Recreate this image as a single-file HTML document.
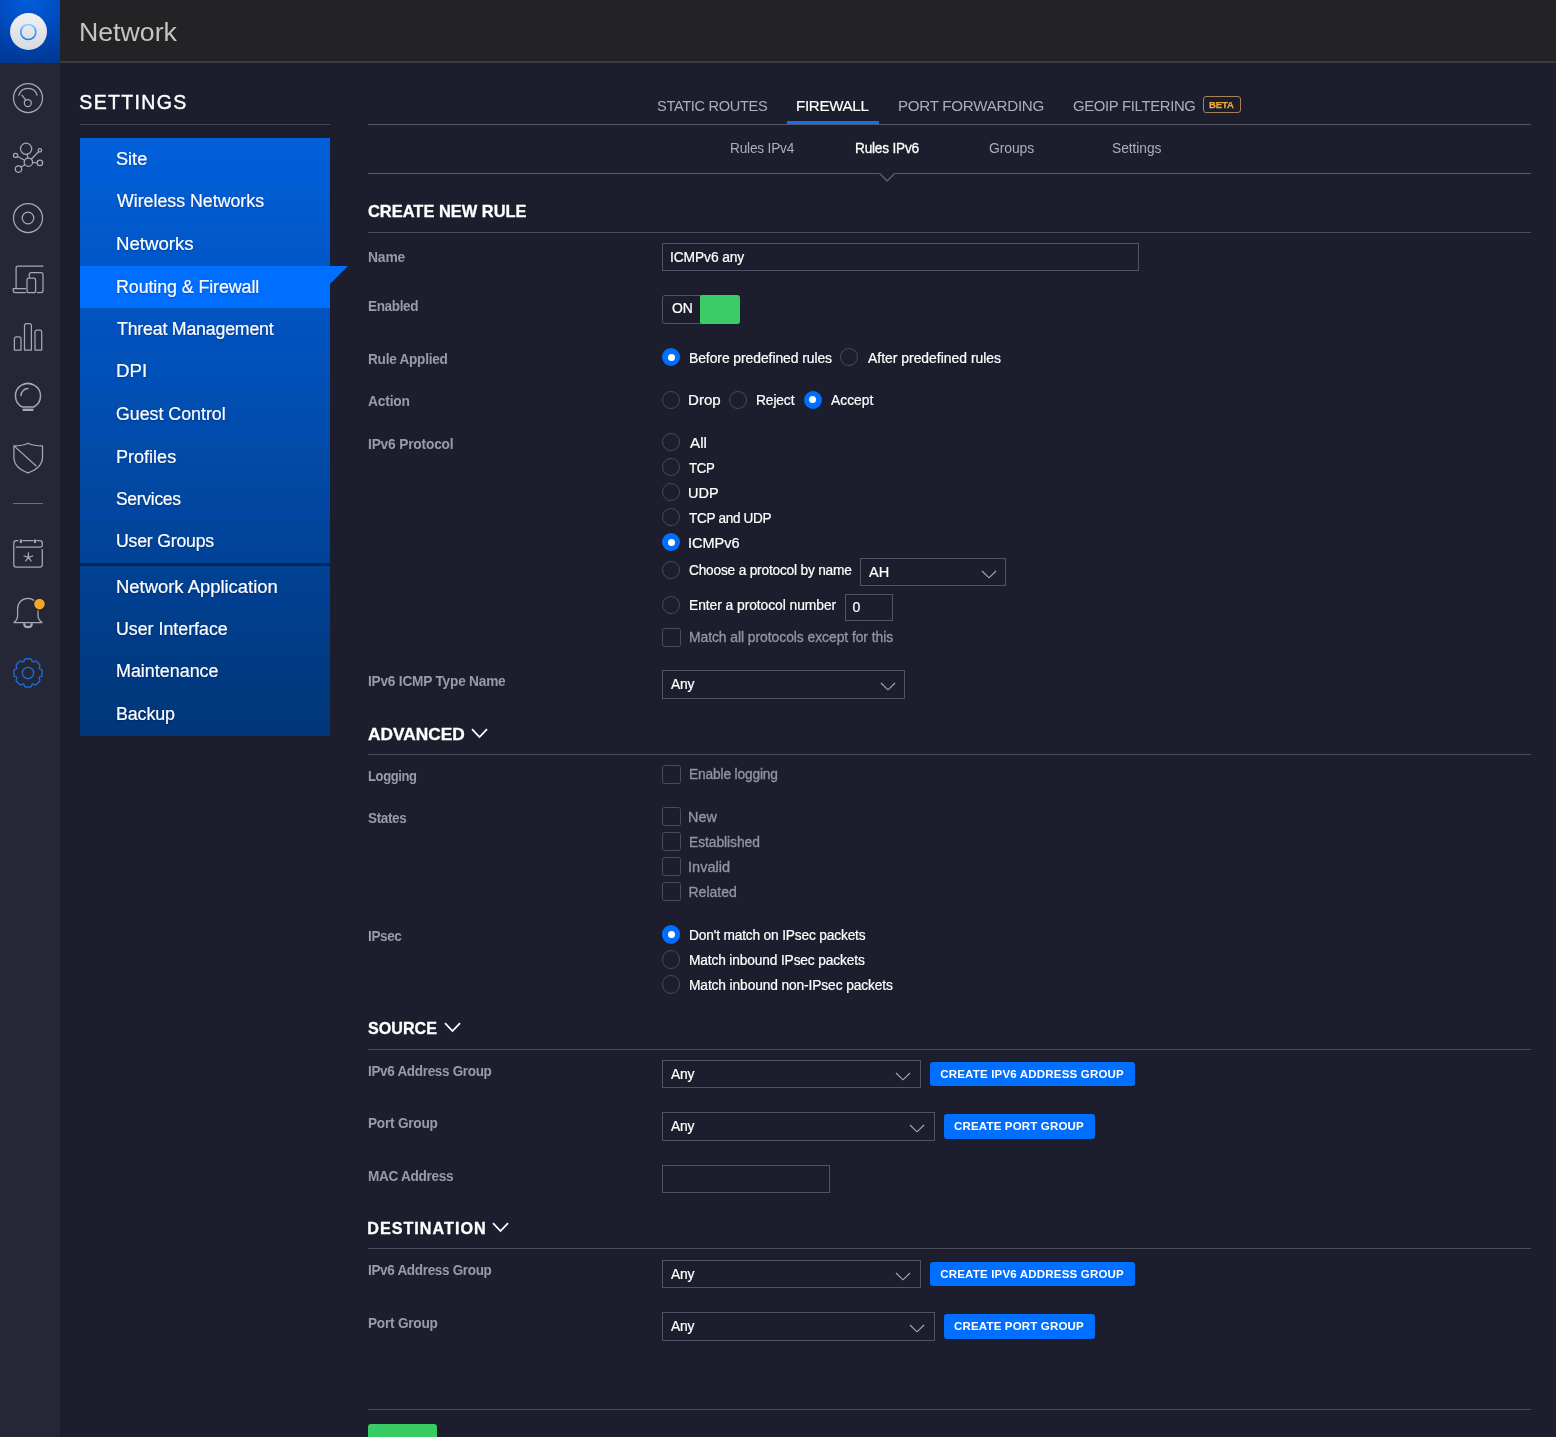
<!DOCTYPE html>
<html lang="en"><head><meta charset="utf-8"><title>Network</title>
<style>
html,body{margin:0;padding:0;}
body{width:1556px;height:1437px;overflow:hidden;background:#1c1e2d;position:relative;font-family:"Liberation Sans",sans-serif;}
.t{position:absolute;white-space:nowrap;line-height:1;display:block;transform-origin:0 0;}
.a{position:absolute;display:block;box-sizing:border-box;}
.hl{position:absolute;height:1px;background:#565866;left:368px;width:1163px;}
.box{position:absolute;box-sizing:border-box;border:1px solid #525463;background:transparent;}
.rd{margin-left:-0.5px;position:absolute;box-sizing:border-box;width:18.4px;height:18.4px;border-radius:50%;border:1px solid #474a5c;}
.rd.on{border:none;background:#006fff;}
.rd.on::after{content:"";position:absolute;left:5.7px;top:5.7px;width:7px;height:7px;border-radius:50%;background:#fff;}
.cb{margin-left:-0.5px;position:absolute;box-sizing:border-box;width:18.5px;height:18.5px;border:1px solid #484a5d;border-radius:2.5px;}
.btn{position:absolute;background:#006fff;border-radius:3px;}
svg{position:absolute;overflow:visible;}
#txt{position:absolute;left:0;top:0;width:1556px;height:1437px;will-change:transform;}

</style></head>
<body>
<!-- header -->
<div class="a" style="left:0;top:0;width:1556px;height:61px;background:#232325;"></div>
<div class="a" style="left:60px;top:61px;width:1496px;height:2px;background:#3b3b41;"></div>
<div class="a" style="left:0;top:0;width:60px;height:63px;background:radial-gradient(circle at 50% 0%,#005edb 0%,#004cc0 45%,#003c9e 80%,#00368f 100%);"></div>
<div class="a" style="left:10px;top:13px;width:37px;height:37px;border-radius:50%;background:linear-gradient(180deg,#f1f1f4 0%,#e5e6eb 45%,#d7d9df 100%);"></div>
<svg width="20" height="20" style="left:18px;top:21.5px" viewBox="0 0 20 20"><defs><linearGradient id="lg" x1="0" y1="0" x2="0" y2="1"><stop offset="0" stop-color="#86d2ff"/><stop offset="0.5" stop-color="#3aa0f8"/><stop offset="1" stop-color="#1f7fec"/></linearGradient></defs><circle cx="10.3" cy="10" r="7.5" fill="none" stroke="url(#lg)" stroke-width="1.7"/></svg>
<!-- sidebar -->
<div class="a" style="left:0;top:63px;width:60px;height:1374px;background:#252736;"></div>
<div class="a" style="left:13px;top:503px;width:30px;height:1px;background:#6b6c7a;"></div>
<svg width="60" height="1437" style="left:0;top:0" viewBox="0 0 60 1437" fill="none" stroke="#a6a8b7" stroke-width="1.25" stroke-linecap="round" stroke-linejoin="round">
<!-- dashboard -->
<circle cx="28" cy="98" r="14.5"/>
<path d="M18.9 95.2 A9.5 9.5 0 0 1 37.1 95.2"/>
<circle cx="27.8" cy="103" r="3.5"/>
<path d="M22 95.2 L25.8 100.2"/>
<!-- topology -->
<circle cx="26.1" cy="148.8" r="5.6"/>
<circle cx="28.4" cy="162.2" r="4.2"/>
<circle cx="15.6" cy="155.4" r="2.1"/>
<circle cx="39.9" cy="150.3" r="1.7"/>
<circle cx="39.9" cy="162.9" r="2.7"/>
<circle cx="18.5" cy="169.1" r="3.2"/>
<path d="M27.2 154.3 L27.7 158 M17.5 156.5 L24.6 160.3 M38.7 151.5 L31.3 159.2 M32.6 162.5 L37.2 162.8 M21 167 L25 164.7"/>
<!-- devices -->
<circle cx="28" cy="218" r="14.5"/>
<circle cx="28" cy="218" r="5.8"/>
<!-- clients -->
<path d="M43 266 H18 Q16.1 266 16.1 268 V288.3"/>
<path d="M25.5 288.5 H13.2 V290.2 Q13.2 292.5 15.5 292.5 H25.5"/>
<path d="M29.3 277.2 V274.5 Q29.3 272.5 31.3 272.5 H41 Q43 272.5 43 274.5 V290.5 Q43 292.5 41 292.5 H37.3"/>
<rect x="27" y="278.2" width="8.6" height="14.5" rx="2"/>
<!-- stats -->
<path d="M14.4 350.1 V338.9 Q14.4 336.9 16.4 336.9 H19 Q21 336.9 21 338.9 V350.1 Z"/>
<path d="M24.5 350.1 V325.6 Q24.5 323.6 26.5 323.6 H29.4 Q31.4 323.6 31.4 325.6 V350.1 Z"/>
<path d="M35 350.1 V332.2 Q35 330.2 37 330.2 H39.7 Q41.7 330.2 41.7 332.2 V350.1 Z"/>
<!-- insights -->
<path d="M22.3 407 C13.5 402.6 13.2 390 21.5 385.2 C30 380.3 40.5 386.5 40.5 395.8 C40.5 400.8 37.8 404.9 33.8 407 Z" stroke-width="1.5"/>
<path d="M21 395.6 A7 7 0 0 1 27.9 388.6" stroke-width="1.5"/>
<path d="M22.6 409.8 H33.4" stroke-width="2.4" stroke-linecap="butt"/>
<!-- shield -->
<path d="M28 443.2 C23 445.6 18.5 445.9 13.9 445.9 V457 C13.9 465 20 470 28 472.8 C36 470 42.5 465 42.5 457 V445.9 C37.5 445.9 33 445.6 28 443.2 Z"/>
<path d="M14.3 446.1 L35.9 465.8"/>
<!-- calendar -->
<path d="M17.8 540.7 H16.4 Q13.8 540.7 13.8 543.3 V564.6 Q13.8 567.2 16.4 567.2 H39.7 Q42.3 567.2 42.3 564.6 V549.4"/>
<path d="M36.9 540.7 H39.7 Q42.3 540.7 42.3 543.3 V545.3 Q42.3 547 40.5 547 H16.2"/>
<path d="M23 540.7 H33"/>
<path d="M20.9 539.6 V543 M35 539.6 V543" stroke-width="2.1" stroke-linecap="butt"/>
<path d="M28.4 553 V557.4 M28.4 557.4 L24.1 556 M28.4 557.4 L32.7 556 M28.4 557.4 L25.7 560.9 M28.4 557.4 L31.1 560.9" stroke-width="1.3"/>
<!-- bell -->
<path d="M14 622.6 H42 C39.3 620.5 38 618.5 38 615.5 V609 C38 602.5 33.5 598.3 27.9 598.3 C22.2 598.3 17.6 602.5 17.6 609 V615.5 C17.6 618.5 16.5 620.5 14 622.6 Z"/>
<path d="M24.3 623.2 V624.2 Q24.3 627.2 28 627.2 Q31.7 627.2 31.7 624.2 V623.2" stroke-width="2.2" stroke-linecap="butt"/>
<circle cx="39.5" cy="604.1" r="5.9" fill="#f5a623" stroke="#222332" stroke-width="1.2"/>
</svg>
<!-- gear -->
<svg width="60" height="60" style="left:0;top:643px" viewBox="0 0 60 60" fill="none" stroke="#1e6bda" stroke-width="1.35" stroke-linejoin="round">
<path d="M23.42 18.83 Q24.09 18.55 24.22 17.16 L24.22 17.16 Q24.34 15.77 26.34 15.77 L29.66 15.77 Q31.66 15.77 31.78 17.16 L31.78 17.16 Q31.91 18.55 32.58 18.83 L32.58 18.83 Q33.26 19.11 34.34 18.22 L34.34 18.22 Q35.41 17.32 36.82 18.73 L39.17 21.08 Q40.58 22.49 39.68 23.56 L39.68 23.56 Q38.79 24.64 39.07 25.32 L39.07 25.32 Q39.35 25.99 40.74 26.12 L40.74 26.12 Q42.13 26.24 42.13 28.24 L42.13 31.56 Q42.13 33.56 40.74 33.68 L40.74 33.68 Q39.35 33.81 39.07 34.48 L39.07 34.48 Q38.79 35.16 39.68 36.24 L39.68 36.24 Q40.58 37.31 39.17 38.72 L36.82 41.07 Q35.41 42.48 34.34 41.58 L34.34 41.58 Q33.26 40.69 32.58 40.97 L32.58 40.97 Q31.91 41.25 31.78 42.64 L31.78 42.64 Q31.66 44.03 29.66 44.03 L26.34 44.03 Q24.34 44.03 24.22 42.64 L24.22 42.64 Q24.09 41.25 23.42 40.97 L23.42 40.97 Q22.74 40.69 21.66 41.58 L21.66 41.58 Q20.59 42.48 19.18 41.07 L16.83 38.72 Q15.42 37.31 16.32 36.24 L16.32 36.24 Q17.21 35.16 16.93 34.48 L16.93 34.48 Q16.65 33.81 15.26 33.68 L15.26 33.68 Q13.87 33.56 13.87 31.56 L13.87 28.24 Q13.87 26.24 15.26 26.12 L15.26 26.12 Q16.65 25.99 16.93 25.32 L16.93 25.32 Q17.21 24.64 16.32 23.56 L16.32 23.56 Q15.42 22.49 16.83 21.08 L19.18 18.73 Q20.59 17.32 21.66 18.22 L21.66 18.22 Q22.74 19.11 23.42 18.83 Z"/>
<circle cx="28" cy="30" r="5.6"/>
</svg>

<!-- settings menu -->
<div class="a" style="left:80px;top:124px;width:250px;height:1px;background:#454757;"></div>
<div class="a" style="left:80px;top:138px;width:250px;height:42.5px;background:linear-gradient(180deg,#0260da,#005cd6);"></div>
<div class="a" style="left:80px;top:180.5px;width:250px;height:42.5px;background:linear-gradient(180deg,#025dd3,#0059cf);"></div>
<div class="a" style="left:80px;top:223px;width:250px;height:42.5px;background:linear-gradient(180deg,#025acd,#0056c9);"></div>
<div class="a" style="left:80px;top:265.5px;width:250px;height:42.5px;background:linear-gradient(180deg,#0257c6,#0053c2);"></div>
<div class="a" style="left:80px;top:308px;width:250px;height:42.5px;background:linear-gradient(180deg,#0254c0,#0050bc);"></div>
<div class="a" style="left:80px;top:350.5px;width:250px;height:42.5px;background:linear-gradient(180deg,#0252b9,#004eb5);"></div>
<div class="a" style="left:80px;top:393px;width:250px;height:42.5px;background:linear-gradient(180deg,#024fb1,#004bad);"></div>
<div class="a" style="left:80px;top:435.5px;width:250px;height:42.5px;background:linear-gradient(180deg,#024caa,#0048a6);"></div>
<div class="a" style="left:80px;top:478px;width:250px;height:42.5px;background:linear-gradient(180deg,#0249a3,#00459f);"></div>
<div class="a" style="left:80px;top:520.5px;width:250px;height:43px;background:linear-gradient(180deg,#02469b,#004297);"></div>
<div class="a" style="left:80px;top:565.5px;width:250px;height:42.5px;background:linear-gradient(180deg,#024293,#003e8f);"></div>
<div class="a" style="left:80px;top:608px;width:250px;height:42.5px;background:linear-gradient(180deg,#023f8c,#003b88);"></div>
<div class="a" style="left:80px;top:650.5px;width:250px;height:42.5px;background:linear-gradient(180deg,#023c84,#003880);"></div>
<div class="a" style="left:80px;top:693px;width:250px;height:42.5px;background:linear-gradient(180deg,#02397d,#003579);"></div>
<div class="a" style="left:80px;top:563px;width:250px;height:2.5px;background:#04275a;"></div>
<div class="a" style="left:80px;top:265.5px;width:250px;height:42.5px;background:#006fff;"></div>
<svg width="20" height="20" style="left:330px;top:265.5px" viewBox="0 0 20 20"><path d="M0 0 H18 L0 18 Z" fill="#006fff"/></svg>

<!-- tabs -->
<div class="hl" style="top:124px;"></div>
<div class="a" style="left:787px;top:121px;width:92px;height:3px;background:#1271ea;"></div>
<div class="a" style="left:1203px;top:96px;width:38px;height:17px;border:1px solid #a5835a;border-radius:3px;"></div>
<div class="hl" style="top:173px;"></div>
<svg width="20" height="12" style="left:877px;top:172px" viewBox="0 0 20 12"><path d="M2.2 0 H18.2 V2 L10.2 9 L2.2 2 Z" fill="#1c1e2d" stroke="none"/><path d="M2.4 1.3 L10.2 8.9 L18 1.3" fill="none" stroke="#565866" stroke-width="1.6"/></svg>

<!-- section lines -->
<div class="hl" style="top:232px;background:#4a4c5a;"></div>
<div class="hl" style="top:754px;background:#4a4c5a;"></div>
<div class="hl" style="top:1049px;background:#4a4c5a;"></div>
<div class="hl" style="top:1248px;background:#4a4c5a;"></div>
<div class="hl" style="top:1409px;background:#4a4c5a;"></div>

<!-- header chevrons -->
<svg width="18" height="11" style="left:471px;top:727.5px" viewBox="0 0 18 11"><path d="M1 1.2 L8.5 9 L16 1.2" fill="none" stroke="#fff" stroke-width="1.8"/></svg>
<svg width="18" height="11" style="left:443.5px;top:1021.5px" viewBox="0 0 18 11"><path d="M1 1.2 L8.5 9 L16 1.2" fill="none" stroke="#fff" stroke-width="1.8"/></svg>
<svg width="18" height="11" style="left:492px;top:1221.5px" viewBox="0 0 18 11"><path d="M1 1.2 L8.5 9 L16 1.2" fill="none" stroke="#fff" stroke-width="1.8"/></svg>

<!-- name input -->
<div class="box" style="left:662px;top:243px;width:477px;height:28px;"></div>
<!-- toggle -->
<div class="box" style="left:662px;top:295px;width:78px;height:29px;border-radius:3px;"></div>
<div class="a" style="left:700px;top:295px;width:40px;height:29px;background:#3bcc66;border-radius:2px 3px 3px 2px;"></div>

<!-- radios -->
<div class="rd on" style="left:662.5px;top:348px;"></div>
<div class="rd" style="left:840.2px;top:348px;"></div>
<div class="rd" style="left:662.5px;top:390.6px;"></div>
<div class="rd" style="left:729.2px;top:390.6px;"></div>
<div class="rd on" style="left:804.2px;top:390.6px;"></div>
<div class="rd" style="left:662.5px;top:433px;"></div>
<div class="rd" style="left:662.5px;top:458px;"></div>
<div class="rd" style="left:662.5px;top:483px;"></div>
<div class="rd" style="left:662.5px;top:508px;"></div>
<div class="rd on" style="left:662.5px;top:533px;"></div>
<div class="rd" style="left:662.5px;top:560.6px;"></div>
<div class="rd" style="left:662.5px;top:595.6px;"></div>
<div class="cb" style="left:662.5px;top:628px;"></div>
<!-- protocol select / number -->
<div class="box" style="left:860px;top:558px;width:146px;height:28px;"></div>
<svg width="16" height="9" style="left:980.5px;top:569.5px" viewBox="0 0 16 9"><path d="M1 1 L8 7.8 L15 1" fill="none" stroke="#a9acb9" stroke-width="1.15"/></svg>
<div class="box" style="left:845px;top:593.5px;width:47.5px;height:27px;"></div>
<!-- icmp type select -->
<div class="box" style="left:662px;top:670px;width:243px;height:29px;"></div>
<svg width="16" height="9" style="left:879.5px;top:681.5px" viewBox="0 0 16 9"><path d="M1 1 L8 7.8 L15 1" fill="none" stroke="#a9acb9" stroke-width="1.15"/></svg>

<!-- advanced -->
<div class="cb" style="left:662.5px;top:765px;"></div>
<div class="cb" style="left:662.5px;top:807px;"></div>
<div class="cb" style="left:662.5px;top:832px;"></div>
<div class="cb" style="left:662.5px;top:857px;"></div>
<div class="cb" style="left:662.5px;top:882px;"></div>
<div class="rd on" style="left:662.5px;top:925.4px;"></div>
<div class="rd" style="left:662.5px;top:950.4px;"></div>
<div class="rd" style="left:662.5px;top:975.4px;"></div>

<!-- source -->
<div class="box" style="left:662px;top:1060px;width:259px;height:28px;"></div>
<svg width="16" height="9" style="left:895px;top:1072px" viewBox="0 0 16 9"><path d="M1 1 L8 7.8 L15 1" fill="none" stroke="#a9acb9" stroke-width="1.15"/></svg>
<div class="btn" style="left:930px;top:1062px;width:205px;height:23.5px;"></div>
<div class="box" style="left:662px;top:1112px;width:273px;height:28.5px;"></div>
<svg width="16" height="9" style="left:909px;top:1124px" viewBox="0 0 16 9"><path d="M1 1 L8 7.8 L15 1" fill="none" stroke="#a9acb9" stroke-width="1.15"/></svg>
<div class="btn" style="left:944px;top:1114px;width:151px;height:24.5px;"></div>
<div class="box" style="left:662px;top:1165px;width:168px;height:28px;"></div>

<!-- destination -->
<div class="box" style="left:662px;top:1259.5px;width:259px;height:28px;"></div>
<svg width="16" height="9" style="left:895px;top:1272px" viewBox="0 0 16 9"><path d="M1 1 L8 7.8 L15 1" fill="none" stroke="#a9acb9" stroke-width="1.15"/></svg>
<div class="btn" style="left:930px;top:1262px;width:205px;height:23.5px;"></div>
<div class="box" style="left:662px;top:1312px;width:273px;height:28.5px;"></div>
<svg width="16" height="9" style="left:909px;top:1324px" viewBox="0 0 16 9"><path d="M1 1 L8 7.8 L15 1" fill="none" stroke="#a9acb9" stroke-width="1.15"/></svg>
<div class="btn" style="left:944px;top:1314px;width:151px;height:24.5px;"></div>

<!-- save button (clipped) -->
<div class="a" style="left:368px;top:1424px;width:69px;height:30px;background:#39cc64;border-radius:3px;"></div>

<div id="txt">
<span class="t" id="t0" style="left:78.87px;top:20px;font-size:25px;font-weight:400;color:#c6c3c0;transform:scaleX(1.0674);">Network</span>
<span class="t" id="t1" style="left:79.25px;top:93px;font-size:19.5px;font-weight:400;color:#fff;letter-spacing:1.371px;-webkit-text-stroke:0.4px #fff;">SETTINGS</span>
<span class="t" id="t2" style="left:116.24px;top:150px;font-size:18px;font-weight:400;color:#fff;transform:scaleX(1.0068);-webkit-text-stroke:0.2px #fff;text-shadow:0 1px 1.5px rgba(0,10,60,0.35);">Site</span>
<span class="t" id="t3" style="left:117.00px;top:192px;font-size:18px;font-weight:400;color:#fff;transform:scaleX(0.9865);-webkit-text-stroke:0.2px #fff;text-shadow:0 1px 1.5px rgba(0,10,60,0.35);">Wireless Networks</span>
<span class="t" id="t4" style="left:115.71px;top:235px;font-size:18px;font-weight:400;color:#fff;transform:scaleX(1.0348);-webkit-text-stroke:0.2px #fff;text-shadow:0 1px 1.5px rgba(0,10,60,0.35);">Networks</span>
<span class="t" id="t5" style="left:115.76px;top:278px;font-size:18px;font-weight:400;color:#fff;letter-spacing:-0.095px;transform:scaleX(0.9915);-webkit-text-stroke:0.2px #fff;text-shadow:0 1px 1.5px rgba(0,10,60,0.35);">Routing &amp; Firewall</span>
<span class="t" id="t6" style="left:116.75px;top:320px;font-size:18px;font-weight:400;color:#fff;letter-spacing:-0.187px;transform:scaleX(0.9846);-webkit-text-stroke:0.2px #fff;text-shadow:0 1px 1.5px rgba(0,10,60,0.35);">Threat Management</span>
<span class="t" id="t7" style="left:115.70px;top:362px;font-size:18px;font-weight:400;color:#fff;transform:scaleX(1.0385);-webkit-text-stroke:0.2px #fff;text-shadow:0 1px 1.5px rgba(0,10,60,0.35);">DPI</span>
<span class="t" id="t8" style="left:116.26px;top:405px;font-size:18px;font-weight:400;color:#fff;transform:scaleX(0.9876);-webkit-text-stroke:0.2px #fff;text-shadow:0 1px 1.5px rgba(0,10,60,0.35);">Guest Control</span>
<span class="t" id="t9" style="left:115.75px;top:448px;font-size:18px;font-weight:400;color:#fff;transform:scaleX(1.0026);-webkit-text-stroke:0.2px #fff;text-shadow:0 1px 1.5px rgba(0,10,60,0.35);">Profiles</span>
<span class="t" id="t10" style="left:116.27px;top:490px;font-size:18px;font-weight:400;color:#fff;letter-spacing:-0.302px;transform:scaleX(0.9719);-webkit-text-stroke:0.2px #fff;text-shadow:0 1px 1.5px rgba(0,10,60,0.35);">Services</span>
<span class="t" id="t11" style="left:115.77px;top:532px;font-size:18px;font-weight:400;color:#fff;letter-spacing:-0.206px;transform:scaleX(0.9822);-webkit-text-stroke:0.2px #fff;text-shadow:0 1px 1.5px rgba(0,10,60,0.35);">User Groups</span>
<span class="t" id="t12" style="left:115.72px;top:578px;font-size:18px;font-weight:400;color:#fff;transform:scaleX(1.0234);-webkit-text-stroke:0.2px #fff;text-shadow:0 1px 1.5px rgba(0,10,60,0.35);">Network Application</span>
<span class="t" id="t13" style="left:115.77px;top:620px;font-size:18px;font-weight:400;color:#fff;transform:scaleX(0.9879);-webkit-text-stroke:0.2px #fff;text-shadow:0 1px 1.5px rgba(0,10,60,0.35);">User Interface</span>
<span class="t" id="t14" style="left:115.76px;top:662px;font-size:18px;font-weight:400;color:#fff;transform:scaleX(0.9946);-webkit-text-stroke:0.2px #fff;text-shadow:0 1px 1.5px rgba(0,10,60,0.35);">Maintenance</span>
<span class="t" id="t15" style="left:115.76px;top:705px;font-size:18px;font-weight:400;color:#fff;letter-spacing:-0.110px;transform:scaleX(0.9913);-webkit-text-stroke:0.2px #fff;text-shadow:0 1px 1.5px rgba(0,10,60,0.35);">Backup</span>
<span class="t" id="t16" style="left:656.79px;top:98px;font-size:15.5px;font-weight:400;color:#abaeba;letter-spacing:-0.341px;transform:scaleX(0.9411);">STATIC ROUTES</span>
<span class="t" id="t17" style="left:796.38px;top:98px;font-size:15.5px;font-weight:400;color:#fff;letter-spacing:-0.318px;transform:scaleX(0.9753);-webkit-text-stroke:0.15px #fff;">FIREWALL</span>
<span class="t" id="t18" style="left:898.28px;top:98px;font-size:15.5px;font-weight:400;color:#abaeba;letter-spacing:-0.285px;transform:scaleX(0.9779);">PORT FORWARDING</span>
<span class="t" id="t19" style="left:1073.28px;top:98px;font-size:15.5px;font-weight:400;color:#abaeba;letter-spacing:-0.341px;transform:scaleX(0.9592);">GEOIP FILTERING</span>
<span class="t" id="t20" style="left:1209.40px;top:100px;font-size:9.6px;font-weight:700;color:#f0a93a;letter-spacing:-0.083px;transform:scaleX(0.9918);-webkit-text-stroke:0.25px #f0a93a;">BETA</span>
<span class="t" id="t21" style="left:729.78px;top:141px;font-size:14px;font-weight:400;color:#abaeba;letter-spacing:-0.202px;transform:scaleX(0.9759);">Rules IPv4</span>
<span class="t" id="t22" style="left:855.02px;top:141px;font-size:14px;font-weight:400;color:#fff;letter-spacing:-0.217px;transform:scaleX(0.9759);-webkit-text-stroke:0.3px #fff;">Rules IPv6</span>
<span class="t" id="t23" style="left:989.25px;top:141px;font-size:14px;font-weight:400;color:#abaeba;letter-spacing:-0.083px;transform:scaleX(0.9944);">Groups</span>
<span class="t" id="t24" style="left:1112.06px;top:141px;font-size:14px;font-weight:400;color:#abaeba;letter-spacing:-0.067px;transform:scaleX(0.9878);">Settings</span>
<span class="t" id="t25" style="left:367.69px;top:203px;font-size:16.2px;font-weight:700;color:#fff;transform:scaleX(1.0151);-webkit-text-stroke:0.3px #fff;">CREATE NEW RULE</span>
<span class="t" id="t26" style="left:367.93px;top:726px;font-size:16.2px;font-weight:700;color:#fff;transform:scaleX(1.0685);-webkit-text-stroke:0.3px #fff;">ADVANCED</span>
<span class="t" id="t27" style="left:367.95px;top:1020px;font-size:16.2px;font-weight:700;color:#fff;transform:scaleX(0.9956);-webkit-text-stroke:0.3px #fff;">SOURCE</span>
<span class="t" id="t28" style="left:367.20px;top:1220px;font-size:16.2px;font-weight:700;color:#fff;letter-spacing:1.000px;-webkit-text-stroke:0.3px #fff;">DESTINATION</span>
<span class="t" id="t29" style="left:367.61px;top:250px;font-size:14px;font-weight:700;color:#999baa;letter-spacing:-0.156px;transform:scaleX(0.9903);">Name</span>
<span class="t" id="t30" style="left:367.64px;top:299px;font-size:14px;font-weight:700;color:#999baa;letter-spacing:-0.348px;transform:scaleX(0.9644);">Enabled</span>
<span class="t" id="t31" style="left:367.63px;top:352px;font-size:14px;font-weight:700;color:#999baa;letter-spacing:-0.263px;transform:scaleX(0.9720);">Rule Applied</span>
<span class="t" id="t32" style="left:368.11px;top:394px;font-size:14px;font-weight:700;color:#999baa;letter-spacing:-0.182px;transform:scaleX(0.9842);">Action</span>
<span class="t" id="t33" style="left:367.62px;top:437px;font-size:14px;font-weight:700;color:#999baa;letter-spacing:-0.179px;transform:scaleX(0.9806);">IPv6 Protocol</span>
<span class="t" id="t34" style="left:367.62px;top:674px;font-size:14px;font-weight:700;color:#999baa;letter-spacing:-0.217px;transform:scaleX(0.9760);">IPv6 ICMP Type Name</span>
<span class="t" id="t35" style="left:367.67px;top:769px;font-size:14px;font-weight:700;color:#999baa;letter-spacing:-0.420px;transform:scaleX(0.9300);">Logging</span>
<span class="t" id="t36" style="left:368.12px;top:811px;font-size:14px;font-weight:700;color:#999baa;letter-spacing:-0.352px;transform:scaleX(0.9631);">States</span>
<span class="t" id="t37" style="left:367.63px;top:929px;font-size:14px;font-weight:700;color:#999baa;letter-spacing:-0.392px;transform:scaleX(0.9672);">IPsec</span>
<span class="t" id="t38" style="left:367.64px;top:1064px;font-size:14px;font-weight:700;color:#999baa;letter-spacing:-0.327px;transform:scaleX(0.9638);">IPv6 Address Group</span>
<span class="t" id="t39" style="left:367.63px;top:1116px;font-size:14px;font-weight:700;color:#999baa;letter-spacing:-0.235px;transform:scaleX(0.9737);">Port Group</span>
<span class="t" id="t40" style="left:367.63px;top:1169px;font-size:14px;font-weight:700;color:#999baa;letter-spacing:-0.316px;transform:scaleX(0.9711);">MAC Address</span>
<span class="t" id="t41" style="left:367.64px;top:1263px;font-size:14px;font-weight:700;color:#999baa;letter-spacing:-0.327px;transform:scaleX(0.9638);">IPv6 Address Group</span>
<span class="t" id="t42" style="left:367.63px;top:1316px;font-size:14px;font-weight:700;color:#999baa;letter-spacing:-0.235px;transform:scaleX(0.9737);">Port Group</span>
<span class="t" id="t43" style="left:670.17px;top:250px;font-size:14px;font-weight:400;color:#fff;letter-spacing:-0.116px;transform:scaleX(0.9878);-webkit-text-stroke:0.22px #fff;">ICMPv6 any</span>
<span class="t" id="t44" style="left:671.90px;top:301px;font-size:14px;font-weight:400;color:#fff;transform:scaleX(0.9949);-webkit-text-stroke:0.22px #fff;">ON</span>
<span class="t" id="t45" style="left:688.51px;top:351px;font-size:14px;font-weight:400;color:#fff;letter-spacing:-0.064px;transform:scaleX(0.9926);-webkit-text-stroke:0.22px #fff;">Before predefined rules</span>
<span class="t" id="t46" style="left:867.70px;top:351px;font-size:14px;font-weight:400;color:#fff;transform:scaleX(0.9940);-webkit-text-stroke:0.22px #fff;">After predefined rules</span>
<span class="t" id="t47" style="left:688.42px;top:393px;font-size:14px;font-weight:400;color:#fff;transform:scaleX(1.0759);-webkit-text-stroke:0.22px #fff;">Drop</span>
<span class="t" id="t48" style="left:756.21px;top:393px;font-size:14px;font-weight:400;color:#fff;letter-spacing:-0.138px;transform:scaleX(0.9868);-webkit-text-stroke:0.22px #fff;">Reject</span>
<span class="t" id="t49" style="left:831.20px;top:393px;font-size:14px;font-weight:400;color:#fff;transform:scaleX(0.9871);-webkit-text-stroke:0.22px #fff;">Accept</span>
<span class="t" id="t50" style="left:689.50px;top:436px;font-size:14px;font-weight:400;color:#fff;transform:scaleX(1.0847);-webkit-text-stroke:0.22px #fff;">All</span>
<span class="t" id="t51" style="left:689.26px;top:461px;font-size:14px;font-weight:400;color:#fff;letter-spacing:-0.308px;transform:scaleX(0.9434);-webkit-text-stroke:0.22px #fff;">TCP</span>
<span class="t" id="t52" style="left:688.46px;top:486px;font-size:14px;font-weight:400;color:#fff;transform:scaleX(1.0357);-webkit-text-stroke:0.22px #fff;">UDP</span>
<span class="t" id="t53" style="left:689.26px;top:511px;font-size:14px;font-weight:400;color:#fff;letter-spacing:-0.308px;transform:scaleX(0.9680);-webkit-text-stroke:0.22px #fff;">TCP and UDP</span>
<span class="t" id="t54" style="left:688.21px;top:536px;font-size:14px;font-weight:400;color:#fff;transform:scaleX(1.0354);-webkit-text-stroke:0.22px #fff;">ICMPv6</span>
<span class="t" id="t55" style="left:689.01px;top:563px;font-size:14px;font-weight:400;color:#fff;letter-spacing:-0.194px;transform:scaleX(0.9776);-webkit-text-stroke:0.22px #fff;">Choose a protocol by name</span>
<span class="t" id="t56" style="left:869.30px;top:565px;font-size:14px;font-weight:400;color:#fff;transform:scaleX(1.0378);-webkit-text-stroke:0.22px #fff;">AH</span>
<span class="t" id="t57" style="left:688.51px;top:598px;font-size:14px;font-weight:400;color:#fff;letter-spacing:-0.072px;transform:scaleX(0.9905);-webkit-text-stroke:0.22px #fff;">Enter a protocol number</span>
<span class="t" id="t58" style="left:852.50px;top:600px;font-size:14px;font-weight:400;color:#fff;letter-spacing:1.250px;-webkit-text-stroke:0.22px #fff;">0</span>
<span class="t" id="t59" style="left:688.51px;top:630px;font-size:14px;font-weight:400;color:#9294a4;letter-spacing:-0.058px;transform:scaleX(0.9922);-webkit-text-stroke:0.32px #9294a4;">Match all protocols except for this</span>
<span class="t" id="t60" style="left:671.00px;top:677px;font-size:14px;font-weight:400;color:#fff;letter-spacing:-0.206px;transform:scaleX(0.9895);-webkit-text-stroke:0.22px #fff;">Any</span>
<span class="t" id="t61" style="left:688.52px;top:767px;font-size:14px;font-weight:400;color:#9294a4;letter-spacing:-0.161px;transform:scaleX(0.9825);-webkit-text-stroke:0.32px #9294a4;">Enable logging</span>
<span class="t" id="t62" style="left:688.47px;top:810px;font-size:14px;font-weight:400;color:#9294a4;transform:scaleX(1.0275);-webkit-text-stroke:0.32px #9294a4;">New</span>
<span class="t" id="t63" style="left:688.51px;top:835px;font-size:14px;font-weight:400;color:#9294a4;letter-spacing:-0.071px;transform:scaleX(0.9886);-webkit-text-stroke:0.32px #9294a4;">Established</span>
<span class="t" id="t64" style="left:688.46px;top:860px;font-size:14px;font-weight:400;color:#9294a4;transform:scaleX(1.0400);-webkit-text-stroke:0.32px #9294a4;">Invalid</span>
<span class="t" id="t65" style="left:688.50px;top:885px;font-size:14px;font-weight:400;color:#9294a4;-webkit-text-stroke:0.32px #9294a4;">Related</span>
<span class="t" id="t66" style="left:688.52px;top:928px;font-size:14px;font-weight:400;color:#fff;letter-spacing:-0.166px;transform:scaleX(0.9796);-webkit-text-stroke:0.22px #fff;">Don't match on IPsec packets</span>
<span class="t" id="t67" style="left:688.52px;top:953px;font-size:14px;font-weight:400;color:#fff;letter-spacing:-0.148px;transform:scaleX(0.9817);-webkit-text-stroke:0.22px #fff;">Match inbound IPsec packets</span>
<span class="t" id="t68" style="left:688.52px;top:978px;font-size:14px;font-weight:400;color:#fff;letter-spacing:-0.130px;transform:scaleX(0.9849);-webkit-text-stroke:0.22px #fff;">Match inbound non-IPsec packets</span>
<span class="t" id="t69" style="left:671.00px;top:1067px;font-size:14px;font-weight:400;color:#fff;letter-spacing:-0.206px;transform:scaleX(0.9895);-webkit-text-stroke:0.22px #fff;">Any</span>
<span class="t" id="t70" style="left:671.00px;top:1119px;font-size:14px;font-weight:400;color:#fff;letter-spacing:-0.206px;transform:scaleX(0.9895);-webkit-text-stroke:0.22px #fff;">Any</span>
<span class="t" id="t71" style="left:671.00px;top:1267px;font-size:14px;font-weight:400;color:#fff;letter-spacing:-0.206px;transform:scaleX(0.9895);-webkit-text-stroke:0.22px #fff;">Any</span>
<span class="t" id="t72" style="left:671.00px;top:1319px;font-size:14px;font-weight:400;color:#fff;letter-spacing:-0.206px;transform:scaleX(0.9895);-webkit-text-stroke:0.22px #fff;">Any</span>
<span class="t" id="t73" style="left:940.20px;top:1069px;font-size:11.5px;font-weight:700;color:#fff;letter-spacing:0.192px;">CREATE IPV6 ADDRESS GROUP</span>
<span class="t" id="t74" style="left:954.10px;top:1121px;font-size:11.5px;font-weight:700;color:#fff;letter-spacing:0.163px;">CREATE PORT GROUP</span>
<span class="t" id="t75" style="left:940.20px;top:1269px;font-size:11.5px;font-weight:700;color:#fff;letter-spacing:0.192px;">CREATE IPV6 ADDRESS GROUP</span>
<span class="t" id="t76" style="left:954.10px;top:1321px;font-size:11.5px;font-weight:700;color:#fff;letter-spacing:0.163px;">CREATE PORT GROUP</span>
</div>
</body></html>
